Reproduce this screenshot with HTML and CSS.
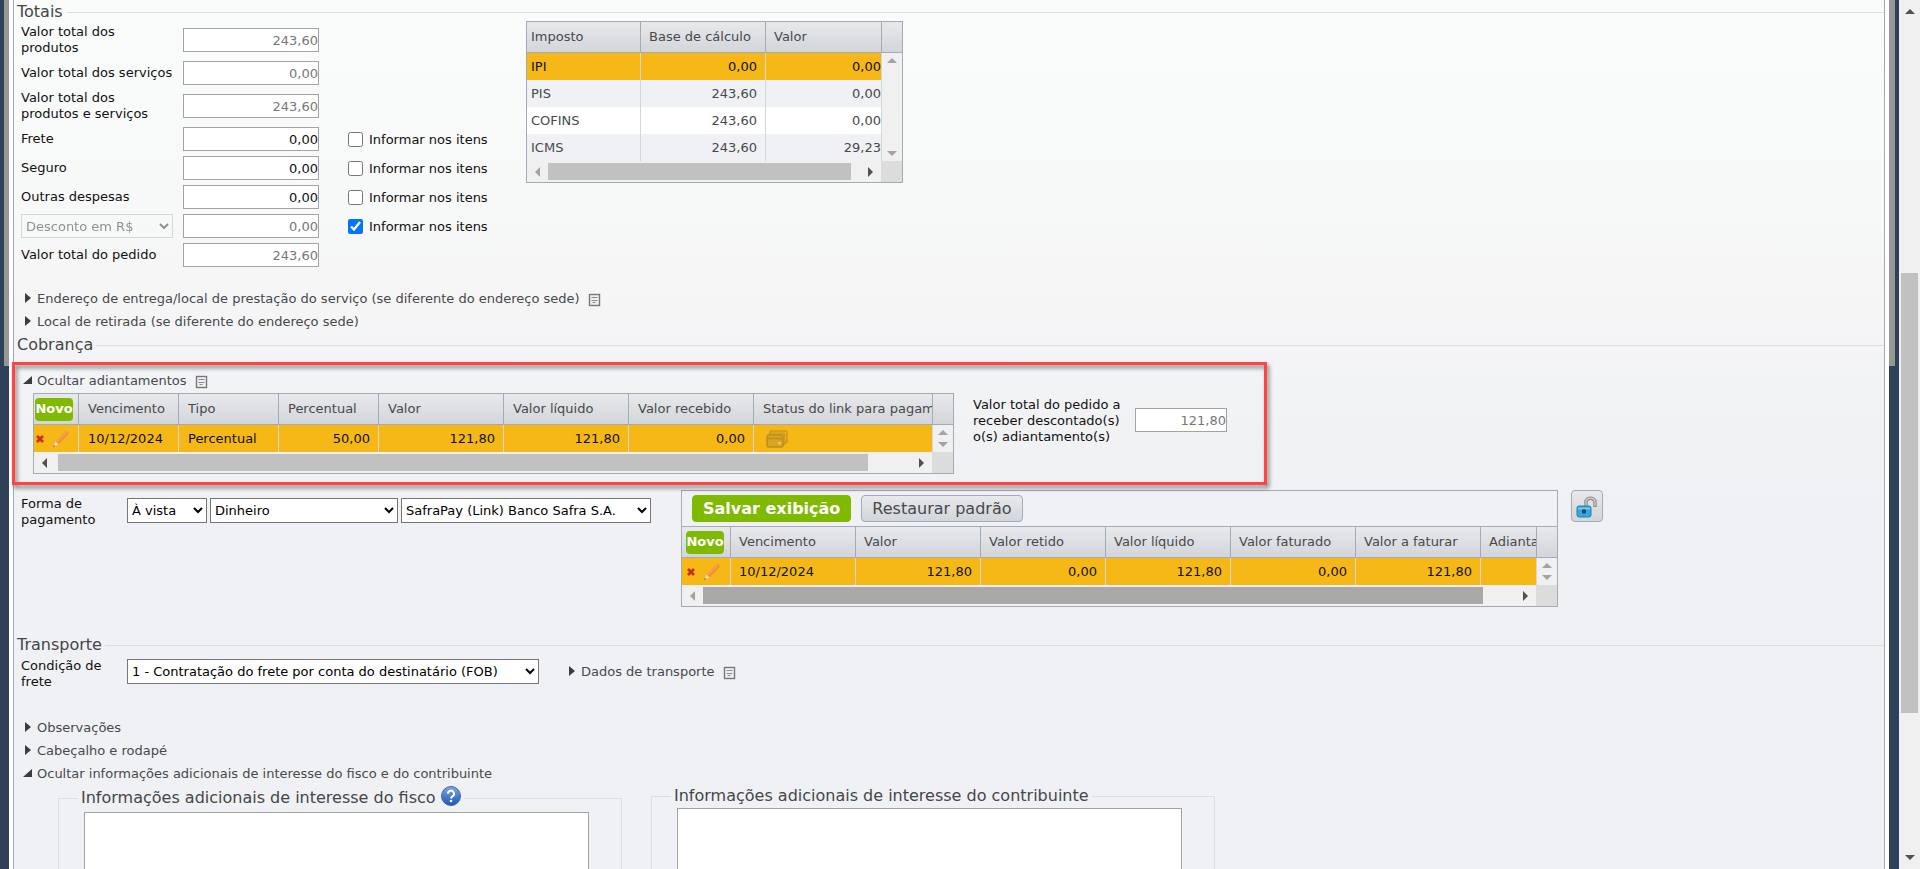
FILE: index.html
```
<!DOCTYPE html>
<html lang="pt-BR">
	<head>
		<meta charset="utf-8">
		<title>Pedido de venda</title>
		<link rel="stylesheet" href="styles.css">
	</head>
	<body>
		<svg class="sprites" aria-hidden="true">
			<symbol id="closed" viewBox="0 0 12 12"><path d="M3 1l6 5-6 5z" fill="#3a3c40"/></symbol>
			<symbol id="opened" viewBox="0 0 12 12"><path d="M10 2v8H1z" fill="#3a3c40"/></symbol>
			<symbol id="note" viewBox="0 0 14 14">
				<rect x="1.500" y="1.500" width="10" height="11" fill="#f1f1f1" stroke="#777" stroke-width="1.400"/>
				<path d="M3.500 4.500h6M3.500 7.500h6M4.500 9.500h3" stroke="#8a8a8a" stroke-width="1"/>
			</symbol>
			<symbol id="remove" viewBox="0 0 10 10"><path d="M2 2l6 6M8 2L2 8" stroke="#c5301c" stroke-width="2.800"/></symbol>
			<symbol id="pencil" viewBox="0 0 18 18">
				<path d="M3.500 11.500L13.500 1.200q2.500-.400 3.500 2.300L6.500 14.500z" fill="#f0913a"/>
				<path d="M4.500 12L14.500 2" stroke="#f5a456" stroke-width="1.400"/>
				<path d="M3.500 11.500l3 3L1.500 16.500z" fill="#f3dcc0"/>
				<path d="M2 15l1 1-2 1z" fill="#555"/>
			</symbol>
			<symbol id="cards" viewBox="0 0 22 18">
				<rect x="4" y="1" width="17" height="12" rx="1.500" fill="none" stroke="#c9971f" stroke-width="1.500"/>
				<rect x="3" y="3" width="16" height="12" rx="1.500" fill="#dda41c" stroke="#c9971f"/>
				<rect x="1" y="5" width="16" height="12" rx="1.500" fill="#dba31e" stroke="#bd8f24" stroke-width="1.500"/>
				<path d="M2 8.500h14" stroke="#bd8f24" stroke-width="1.500"/>
				<rect x="12" y="12" width="3" height="2.500" fill="#ecc253"/>
			</symbol>
		</svg>

		<div class="page">
			<main class="panel">
				<fieldset class="section">
					<legend>Totais</legend>
					<div class="totals">
						<div class="totals-form">
							<label for="produtos">Valor total dos produtos</label>
							<input id="produtos" class="value" value="243,60" disabled>
							<span></span>

							<label for="servicos">Valor total dos serviços</label>
							<input id="servicos" class="value" value="0,00" disabled>
							<span></span>

							<label for="prodserv">Valor total dos produtos e serviços</label>
							<input id="prodserv" class="value" value="243,60" disabled>
							<span></span>

							<label for="frete">Frete</label>
							<input id="frete" class="value" value="0,00">
							<label class="check"><input type="checkbox"><span>Informar nos itens</span></label>

							<label for="seguro">Seguro</label>
							<input id="seguro" class="value" value="0,00">
							<label class="check"><input type="checkbox"><span>Informar nos itens</span></label>

							<label for="outras">Outras despesas</label>
							<input id="outras" class="value" value="0,00">
							<label class="check"><input type="checkbox"><span>Informar nos itens</span></label>

							<select class="discount" aria-label="Tipo de desconto" disabled><option>Desconto em R$</option></select>
							<input class="value" aria-label="Desconto" value="0,00" disabled>
							<label class="check"><input type="checkbox" checked><span>Informar nos itens</span></label>

							<label for="pedido">Valor total do pedido</label>
							<input id="pedido" class="value" value="243,60" disabled>
							<span></span>
						</div>

						<div class="grid taxes">
							<table>
								<colgroup><col class="w-tax"><col class="w-base"><col><col class="w-bar"></colgroup>
								<thead>
									<tr><th>Imposto</th><th>Base de cálculo</th><th>Valor</th><th></th></tr>
								</thead>
								<tbody>
									<tr class="selected">
										<td>IPI</td><td class="num">0,00</td><td class="num">0,00</td>
										<td class="vbar" rowspan="4"><div><i class="up"></i><i class="down"></i></div></td>
									</tr>
									<tr><td>PIS</td><td class="num">243,60</td><td class="num">0,00</td></tr>
									<tr><td>COFINS</td><td class="num">243,60</td><td class="num">0,00</td></tr>
									<tr><td>ICMS</td><td class="num">243,60</td><td class="num">29,23</td></tr>
								</tbody>
							</table>
							<div class="hbar"><i class="left off"></i><div class="track"><div class="thumb"></div></div><i class="right"></i></div>
						</div>
					</div>

					<div class="toggles">
						<div><button class="toggle"><svg><use href="#closed"/></svg>Endereço de entrega/local de prestação do serviço (se diferente do endereço sede)</button><svg class="note"><use href="#note"/></svg></div>
						<div><button class="toggle"><svg><use href="#closed"/></svg>Local de retirada (se diferente do endereço sede)</button></div>
					</div>
				</fieldset>

				<fieldset class="section">
					<legend>Cobrança</legend>
					<div class="advances">
						<div class="highlight"></div>
						<button class="toggle"><svg><use href="#opened"/></svg>Ocultar adiantamentos</button><svg class="note"><use href="#note"/></svg>
						<div class="advances-row">
							<div class="grid advances-grid">
								<table>
									<colgroup><col class="w-actions"><col class="w-100"><col class="w-100"><col class="w-100"><col class="w-125"><col class="w-125"><col class="w-125"><col><col class="w-bar"></colgroup>
									<thead>
										<tr>
											<th class="actions"><button class="new">Novo</button></th>
											<th>Vencimento</th><th>Tipo</th><th>Percentual</th><th>Valor</th><th>Valor líquido</th><th>Valor recebido</th><th>Status do link para pagamento</th><th></th>
										</tr>
									</thead>
									<tbody>
										<tr class="selected">
											<td class="actions"><svg class="remove"><use href="#remove"/></svg><svg class="pencil"><use href="#pencil"/></svg></td>
											<td>10/12/2024</td><td>Percentual</td>
											<td class="num">50,00</td><td class="num">121,80</td><td class="num">121,80</td><td class="num">0,00</td>
											<td><svg class="cards"><use href="#cards"/></svg></td>
											<td class="vbar"><div><i class="up"></i><i class="down"></i></div></td>
										</tr>
									</tbody>
								</table>
								<div class="hbar"><i class="left"></i><div class="track"><div class="thumb"></div></div><i class="right"></i></div>
							</div>
							<label class="due-label" for="receber">Valor total do pedido a receber descontado(s) o(s) adiantamento(s)</label>
							<input id="receber" class="value due" value="121,80" disabled>
						</div>
					</div>

					<div class="payment">
						<label class="caption" for="forma">Forma de pagamento</label>
						<div class="selects">
							<select id="forma" class="term"><option>À vista</option></select>
							<select class="method" aria-label="Meio de pagamento"><option>Dinheiro</option></select>
							<select class="bank" aria-label="Conta"><option>SafraPay (Link) Banco Safra S.A.</option></select>
						</div>
						<div class="grid payment-grid">
							<div class="toolbar">
								<button class="btn primary">Salvar exibição</button>
								<button class="btn">Restaurar padrão</button>
							</div>
							<table>
								<colgroup><col class="w-actions-wide"><col class="w-125"><col class="w-125"><col class="w-125"><col class="w-125"><col class="w-125"><col class="w-125"><col><col class="w-bar"></colgroup>
								<thead>
									<tr>
										<th class="actions"><button class="new">Novo</button></th>
										<th>Vencimento</th><th>Valor</th><th>Valor retido</th><th>Valor líquido</th><th>Valor faturado</th><th>Valor a faturar</th><th>Adiantamento</th><th></th>
									</tr>
								</thead>
								<tbody>
									<tr class="selected">
										<td class="actions"><svg class="remove"><use href="#remove"/></svg><svg class="pencil"><use href="#pencil"/></svg></td>
										<td>10/12/2024</td>
										<td class="num">121,80</td><td class="num">0,00</td><td class="num">121,80</td><td class="num">0,00</td><td class="num">121,80</td>
										<td></td>
										<td class="vbar"><div><i class="up"></i><i class="down"></i></div></td>
									</tr>
								</tbody>
							</table>
							<div class="hbar dark"><i class="left off"></i><div class="track"><div class="thumb"></div></div><i class="right"></i></div>
						</div>
						<button class="lock" aria-label="Desbloquear">
							<svg viewBox="0 0 24 26">
								<path d="M12 14V8a5 5 0 0 1 9 0v6" fill="none" stroke="#8f8f8f" stroke-width="3.500"/>
								<path d="M12 13V8a5 5 0 0 1 9 0v5" fill="none" stroke="#d0d0d0" stroke-width="1.200"/>
								<rect x="3" y="13" width="14" height="11" rx="2" fill="#35a9dc" stroke="#2b7fa8"/>
								<path d="M4 15.500h12" stroke="#7fd0f0" stroke-width="1.500"/>
								<circle cx="10" cy="18.500" r="2.200" fill="#12496e"/>
							</svg>
						</button>
					</div>
				</fieldset>

				<fieldset class="section">
					<legend>Transporte</legend>
					<div class="freight">
						<label class="caption" for="condicao">Condição de frete</label>
						<select id="condicao" class="condition"><option>1 - Contratação do frete por conta do destinatário (FOB)</option></select>
						<div><button class="toggle"><svg><use href="#closed"/></svg>Dados de transporte</button><svg class="note"><use href="#note"/></svg></div>
					</div>
				</fieldset>

				<div class="toggles extras">
					<div><button class="toggle"><svg><use href="#closed"/></svg>Observações</button></div>
					<div><button class="toggle"><svg><use href="#closed"/></svg>Cabeçalho e rodapé</button></div>
					<div><button class="toggle"><svg><use href="#opened"/></svg>Ocultar informações adicionais de interesse do fisco e do contribuinte</button></div>
				</div>

				<div class="infos">
					<fieldset class="info">
						<legend class="with-help">Informações adicionais de interesse do fisco
							<svg class="help" viewBox="0 0 20 20">
								<defs><linearGradient id="blue" x2="0" y2="1"><stop stop-color="#7fa8e0"/><stop offset="1" stop-color="#1d55b5"/></linearGradient></defs>
								<circle cx="10" cy="10" r="9.500" fill="url(#blue)" stroke="#3c68b0"/>
								<path d="M7 7.800a3 3 0 1 1 4.600 2.400c-1.200.800-1.500 1.200-1.500 2.300" fill="none" stroke="#fff" stroke-width="2"/>
								<circle cx="10" cy="15" r="1.300" fill="#fff"/>
							</svg>
						</legend>
						<textarea aria-label="Informações adicionais de interesse do fisco"></textarea>
					</fieldset>
					<fieldset class="info">
						<legend>Informações adicionais de interesse do contribuinte</legend>
						<textarea aria-label="Informações adicionais de interesse do contribuinte"></textarea>
					</fieldset>
				</div>
			</main>
			<div class="page-bar"><i class="up"></i><div class="page-track"><div class="page-thumb"></div></div><i class="down"></i></div>
		</div>
	</body>
</html>
```
FILE: styles.css
```
* {
	box-sizing: border-box;
}
body {
	margin: 0;
	background: #2f4159;
	color: #111;
	font: 13px/16px "DejaVu Sans", Verdana, sans-serif;
}
input,
select,
button,
textarea {
	font: inherit;
	margin: 0;
}
.sprites {
	display: none;
}

/* page frame */
.page {
	display: flex;
	height: 100vh;
	overflow: hidden;
	padding-left: 9px;
	background: linear-gradient(#979793, #979793) 4px 0 / calc(100% - 29px) 366px no-repeat;
}
.panel {
	flex: 1;
	min-width: 0;
	align-self: flex-start;
	min-height: 100vh;
	margin-right: 14px;
	padding-top: 2px;
	border: solid #a3a8b0;
	border-width: 0 1px;
	outline: 4px solid #fff;
	margin-left: 4px;
	background: linear-gradient(#f9fcfa 0, #f8faf9 160px, #f6f6f7 280px, #f1f2f4 420px, #f0f1f4 500px);
}
.section {
	margin: 0;
	padding: 0;
	border: 0;
	border-top: 1px solid #dcdee0;
	min-width: 0;
}
legend {
	padding: 0 3px;
	color: #444648;
	font-size: 16px;
	line-height: 20px;
}

/* inputs */
.value {
	width: 136px;
	height: 24px;
	padding: 0;
	border: 1px solid #a3a3a3;
	background: #fff;
	color: #111;
	text-align: right;
}
.value:disabled {
	color: #777;
}
select {
	height: 25px;
	border: 1px solid #767676;
	background: #fff;
	color: #000;
}

/* totals */
.totals {
	display: flex;
	align-items: flex-start;
	padding-top: 2px;
}
.totals-form {
	display: grid;
	grid-template-columns: 162px 136px 178px;
	align-items: center;
	row-gap: 5px;
	width: 512px;
	padding-left: 7px;
	flex: none;
}
.totals-form > label:not(.check) {
	padding-right: 8px;
}
.discount {
	width: 152px;
	height: 24px;
	border-color: #c8cacb;
	background: transparent;
	color: #666;
}
.check {
	display: flex;
	align-items: center;
	padding-left: 29px;
	gap: 6px;
}
.check input {
	width: 15px;
	height: 15px;
}
.check span {
	padding-top: 2px;
}

/* data grids */
.grid {
	flex: none;
	border: 1px solid #a3abb6;
	background: #f0f0f0;
}
.grid table {
	width: 100%;
	table-layout: fixed;
	border-collapse: separate;
	border-spacing: 0;
}
.grid th {
	height: 31px;
	padding: 0 0 0 9px;
	border-bottom: 1px solid #a3abb6;
	border-right: 1px solid #a3abb6;
	background: linear-gradient(#e8e9ec, #d2d5d9);
	color: #47494c;
	font-weight: normal;
	text-align: left;
	white-space: nowrap;
	overflow: hidden;
}
.grid th:last-child {
	border-right: 0;
}
.grid td {
	height: 27px;
	padding: 0 8px 0 9px;
	border-right: 1px solid #d3d6da;
	background: #f0f1f4;
	color: #47494c;
	white-space: nowrap;
}
.grid tr:nth-child(odd) td {
	background: #fff;
}
.grid tr.selected td {
	background: #f5b816;
	color: #111;
}
.grid td.num {
	text-align: right;
}
.grid .actions {
	padding: 0 0 0 1px;
}
.grid tr td.vbar,
.grid tr.selected td.vbar {
	padding: 0;
	border: 0;
	background: #f0f0f0;
}
.vbar div {
	display: flex;
	flex-direction: column;
	justify-content: space-between;
	align-items: center;
	padding: 5px 0;
	height: 100%;
}
.vbar i {
	border-color: #a3a3a3 transparent;
}
.w-bar {
	width: 20px;
}
.w-tax {
	width: 114px;
}
.w-base {
	width: 125px;
}
.w-100 {
	width: 100px;
}
.w-125 {
	width: 125px;
}
.w-actions {
	width: 45px;
}
.w-actions-wide {
	width: 49px;
}

/* scroll bars */
.up,
.down,
.left,
.right {
	width: 0;
	height: 0;
	border: 0 solid transparent;
}
.up {
	border-width: 0 5px 5px;
	border-color: #505050 transparent;
}
.down {
	border-width: 5px 5px 0;
	border-color: #505050 transparent;
}
.left {
	border-width: 5px 5px 5px 0;
	border-color: transparent #505050;
}
.right {
	border-width: 5px 0 5px 5px;
	border-color: transparent #505050;
}
.left.off {
	border-color: transparent #a3a3a3;
}
.hbar {
	display: flex;
	align-items: center;
	gap: 8px;
	height: 21px;
	padding: 0 29px 0 8px;
	background: linear-gradient(#dcdcdc, #dcdcdc) right / 21px 100% no-repeat;
}
.track {
	flex: 1;
}
.thumb {
	width: 97%;
	height: 17px;
	background: #c1c1c1;
}
.advances-grid .track {
	padding-left: 3px;
}
.advances-grid .thumb {
	width: 95%;
}
.dark .thumb {
	width: 96%;
	background: #a8a8a8;
}

/* taxes */
.taxes {
	width: 377px;
	margin-top: -3px;
}
.taxes th {
	padding-left: 8px;
}
.taxes td,
.taxes th:first-child {
	padding-left: 4px;
}
.taxes td:nth-child(3) {
	padding-right: 0;
}

/* expandable headings */
.toggles {
	display: grid;
	gap: 7px;
	padding: 24px 0 5px 8px;
}
.toggle {
	padding: 0;
	border: 0;
	background: none;
	color: #47494c;
	line-height: 16px;
	vertical-align: top;
	cursor: pointer;
}
.toggle svg {
	width: 12px;
	height: 12px;
	margin-right: 3px;
	vertical-align: -1px;
}
.note {
	width: 14px;
	height: 14px;
	margin: 2px 0 0 8px;
	vertical-align: top;
}

/* advances */
.advances {
	position: relative;
	padding: 18px 0 16px 19px;
}
.advances > .toggle {
	margin-left: -11px;
}
.highlight {
	position: absolute;
	top: 7px;
	left: -2px;
	width: 1255px;
	height: 123px;
	border: 3px solid #ff4444;
	filter: drop-shadow(2px 3px 2px rgba(0, 0, 0, 0.5));
	pointer-events: none;
}
.advances-row {
	display: flex;
	align-items: flex-start;
	margin-top: 4px;
}
.advances-grid {
	width: 921px;
}
.new {
	display: block;
	width: 38px;
	height: 23px;
	padding: 0;
	border: 0;
	border-radius: 4px;
	background: #7fba00;
	color: #fff;
	font-size: 13px;
	font-weight: bold;
}
.remove {
	width: 10px;
	height: 10px;
	margin-right: 7px;
	vertical-align: middle;
}
.pencil {
	width: 18px;
	height: 18px;
	vertical-align: middle;
}
.cards {
	display: block;
	width: 22px;
	height: 18px;
	margin-left: 3px;
}
.due-label {
	width: 181px;
	margin-top: 4px;
	padding-left: 19px;
}
.due {
	width: 92px;
	margin-top: 15px;
}

/* payment */
.payment {
	display: flex;
	align-items: flex-start;
	padding: 0 0 28px 7px;
}
.caption {
	flex: none;
	width: 106px;
	padding-right: 20px;
}
.payment .caption {
	margin-top: 6px;
}
.selects {
	display: flex;
	flex: none;
	gap: 3px;
	width: 554px;
	margin-top: 8px;
}
.term {
	width: 80px;
}
.method {
	width: 188px;
}
.bank {
	width: 250px;
}
.payment-grid {
	width: 877px;
}
.payment-grid .actions {
	padding-left: 4px;
}
.payment-grid th,
.payment-grid td {
	padding-left: 8px;
}
.toolbar {
	display: flex;
	gap: 10px;
	height: 36px;
	padding: 4px 10px;
	border-bottom: 1px solid #a3abb6;
	background: #f0f1f4;
}
.btn {
	height: 27px;
	padding: 0 10px;
	border: 1px solid #a3abb6;
	border-radius: 4px;
	background: linear-gradient(#e8e9ec, #d2d5d9);
	color: #47494c;
	font-size: 16px;
}
.btn.primary {
	border-color: #7fba00;
	background: #7fba00;
	color: #fff;
	font-weight: bold;
}
.lock {
	width: 32px;
	height: 32px;
	margin-left: 13px;
	padding: 2px;
	border: 1px solid #a3abb6;
	border-radius: 4px;
	background: linear-gradient(#e8e9ec, #d2d5d9);
}
.lock svg {
	display: block;
	width: 24px;
	height: 26px;
}

/* freight */
.freight {
	display: flex;
	align-items: flex-start;
	padding: 3px 0 0 7px;
}
.condition {
	width: 412px;
	margin: 1px 27px 0 0;
}
.freight > div {
	margin-top: 6px;
}
.extras {
	padding-bottom: 4px;
	padding-top: 30px;
}

/* additional info */
.infos {
	display: flex;
	align-items: flex-start;
	gap: 29px;
	padding-left: 44px;
}
.info {
	width: 564px;
	margin: 0;
	padding: 2px 31px 12px 25px;
	border: 1px solid #dcdee0;
}
.info legend {
	margin-left: -6px;
}
.info .with-help {
	line-height: 24px;
}
.help {
	width: 20px;
	height: 20px;
	vertical-align: top;
}
.info textarea {
	display: block;
	width: 505px;
	height: 110px;
	border: 1px solid #a3a3a3;
	background: #fff;
	resize: none;
}

/* window scroll bar */
.page-bar {
	display: flex;
	flex-direction: column;
	align-items: center;
	flex: none;
	width: 21px;
	padding: 9px 0;
	background: #f0f0f0;
}
.page-track {
	flex: 1;
	width: 17px;
	padding-top: 259px;
}
.page-thumb {
	height: 440px;
	background: #c1c1c1;
}
```
